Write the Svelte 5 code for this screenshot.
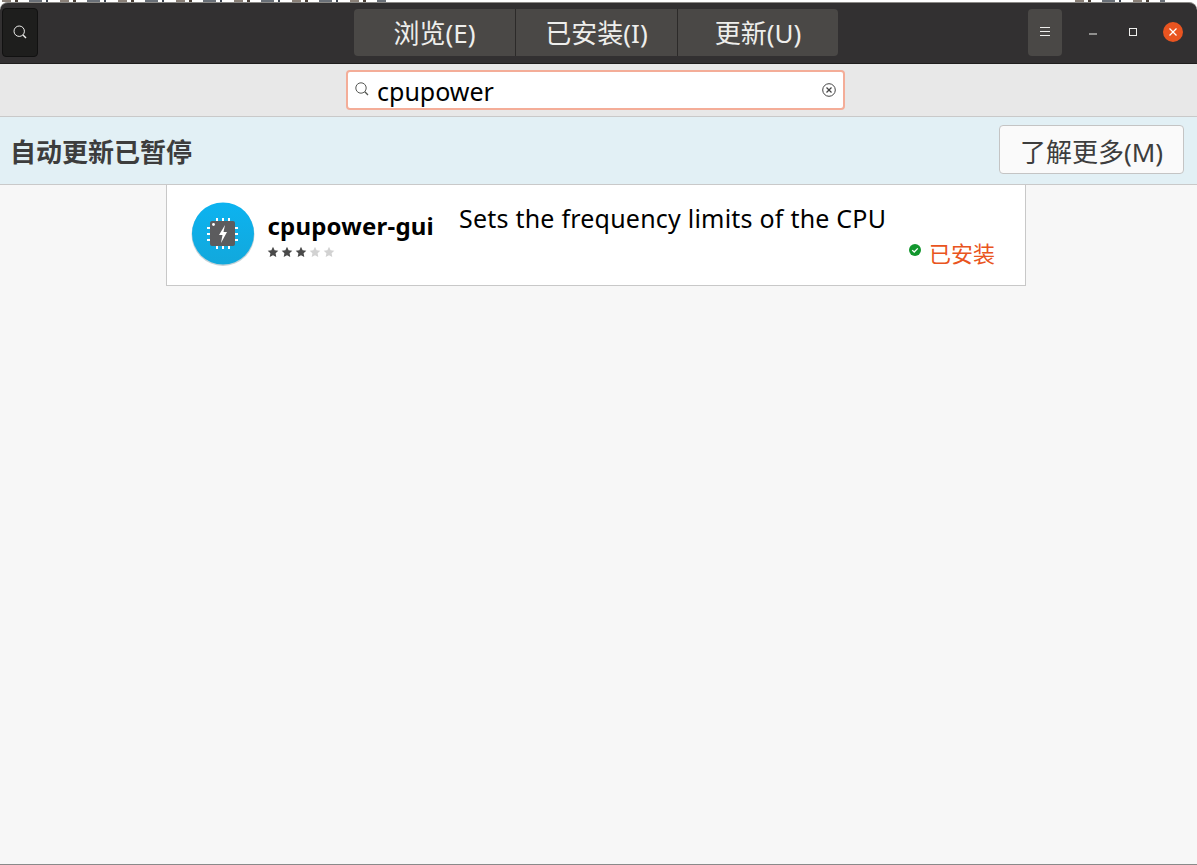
<script>
  const tabs = [
    { label: '浏览(E)', width: 161 },
    { label: '已安装(I)', width: 162 },
    { label: '更新(U)', width: 161 }
  ];
  const stars = [true, true, true, false, false];
  // little pins around the chip, offsets inside the 64px icon
  const pins = [25, 31, 37];
</script>

<div class="window">
  <div class="behind">
    <span class="scraps left"></span>
    <span class="scraps right"></span>
  </div>

  <header class="titlebar">
    <button class="tool search-toggle" aria-label="搜索">
      <svg width="16" height="16" viewBox="0 0 16 16" fill="none" stroke="#eeeeec" stroke-width="1">
        <circle cx="7.2" cy="7.2" r="5.2" />
        <line x1="11" y1="11" x2="14" y2="14" stroke-width="1.4" />
      </svg>
    </button>

    <nav class="tabs">
      {#each tabs as tab}
        <button class="tab" style="width: {tab.width}px">{tab.label}</button>
      {/each}
    </nav>

    <div class="controls">
      <button class="tool menu" aria-label="菜单">
        <svg width="12" height="12" viewBox="0 0 12 12" stroke="#eeeeec" stroke-width="1">
          <line x1="1" y1="1.5" x2="11" y2="1.5" />
          <line x1="1" y1="5.5" x2="11" y2="5.5" />
          <line x1="1" y1="9.5" x2="11" y2="9.5" />
        </svg>
      </button>
      <svg class="min" width="8" height="2" viewBox="0 0 8 2"><rect width="8" height="1" y="0.5" fill="#eeeeec" /></svg>
      <svg class="max" width="8" height="8" viewBox="0 0 8 8" fill="none" stroke="#eeeeec" stroke-width="1"><rect x="0.5" y="0.5" width="7" height="7" /></svg>
      <span class="close">
        <svg width="10" height="10" viewBox="0 0 10 10" stroke="#fff" stroke-width="1.3">
          <line x1="1.5" y1="1.5" x2="8.5" y2="8.5" />
          <line x1="8.5" y1="1.5" x2="1.5" y2="8.5" />
        </svg>
      </span>
    </div>
  </header>

  <div class="searchbar">
    <div class="entry">
      <svg class="entry-icon" width="16" height="16" viewBox="0 0 16 16" fill="none" stroke="#555753" stroke-width="1">
        <circle cx="7" cy="7" r="5.2" />
        <line x1="10.8" y1="10.8" x2="14" y2="14" stroke-width="1.3" />
      </svg>
      <span class="query">cpupower</span>
      <svg class="clear" width="16" height="16" viewBox="0 0 16 16" fill="none" stroke="#444" stroke-width="1">
        <circle cx="8" cy="8" r="6.3" />
        <line x1="5.5" y1="5.5" x2="10.5" y2="10.5" stroke-width="1.3" />
        <line x1="10.5" y1="5.5" x2="5.5" y2="10.5" stroke-width="1.3" />
      </svg>
    </div>
  </div>

  <div class="infobar">
    <strong>自动更新已暂停</strong>
    <button class="more">了解更多(M)</button>
  </div>

  <main class="content">
    <div class="card">
      <svg class="app-icon" width="64" height="64" viewBox="0 0 64 64">
        <defs>
          <linearGradient id="disc" x1="0" y1="0" x2="0" y2="1">
            <stop offset="0" stop-color="#0cb3f0" />
            <stop offset="1" stop-color="#12a8dc" />
          </linearGradient>
        </defs>
        <circle cx="32" cy="32.5" r="31.5" fill="#6f8f9c" opacity="0.4" />
        <circle cx="32" cy="31.5" r="31" fill="url(#disc)" />
        <g fill="#fff">
          {#each pins as p}
            <rect x={p} y="16" width="2" height="3" />
            <rect x={p} y="44" width="2" height="3" />
            <rect x="16" y={p} width="3" height="2" />
            <rect x="44" y={p} width="3" height="2" />
          {/each}
        </g>
        <rect x="19" y="19" width="25" height="25" rx="2" fill="#5c5c5e" />
        <circle cx="22.5" cy="22.5" r="1.4" fill="#fff" />
        <path d="M34 23 L28 33 H31.5 L30 41 L36 30 H32.5 Z" fill="#fff" />
      </svg>
      <div class="name-col">
        <div class="name">cpupower-gui</div>
        <div class="stars">
          {#each stars as on}
            <svg width="12" height="12" viewBox="0 0 12 12"><path d="M6 .8l1.6 3.4 3.7.5-2.7 2.6.7 3.7L6 9.2 2.7 11l.7-3.7L.7 4.7l3.7-.5z" fill={on ? '#4a4a4a' : '#d2d2d2'} /></svg>
          {/each}
        </div>
      </div>
      <div class="summary">Sets the frequency limits of the CPU</div>
      <div class="status">
        <svg class="tick" width="12" height="12" viewBox="0 0 12 12">
          <circle cx="6" cy="6" r="6" fill="#12972e" />
          <path d="M3.2 6.1 L5.2 8 L8.8 4.4" fill="none" stroke="#fff" stroke-width="1.3" />
        </svg>
        <span>已安装</span>
      </div>
    </div>
  </main>
</div>

<style>
  :global(body) {
    margin: 0;
    background: #fff;
  }

  .window {
    width: 1197px;
    height: 865px;
    box-sizing: border-box;
    position: relative;
    padding-top: 2px;
    display: flex;
    flex-direction: column;
    overflow: hidden;
    font-family: "Noto Sans", "Noto Sans CJK SC", sans-serif;
  }

  /* bottoms of the letters of whatever sits behind the window */
  .behind {
    position: absolute;
    left: 0;
    top: 0;
    right: 0;
    height: 3px;
  }

  .scraps {
    position: absolute;
    top: 0;
    height: 2px;
    background: repeating-linear-gradient(90deg,
      #8a8078 0 9px, #fff 9px 13px, #4a4038 13px 16px, #fff 16px 27px,
      #6a7078 27px 40px, #fff 40px 44px, #3c4450 44px 46px, #fff 46px 58px);
  }

  .scraps.left {
    left: 2px;
    width: 384px;
  }

  .scraps.right {
    left: 1075px;
    width: 90px;
    height: 3px;
  }

  button {
    font: inherit;
    padding: 0;
    cursor: pointer;
  }

  .titlebar {
    height: 62px;
    flex-shrink: 0;
    position: relative;
    display: flex;
    align-items: center;
    box-sizing: border-box;
    padding: 0 2px 2px;
    background: #323031;
    border-top: 1px solid #8b8986;
    border-bottom: 1px solid #1f1e1d;
    border-radius: 8px 8px 0 0;
  }

  .tool {
    width: 36px;
    height: 49px;
    display: flex;
    align-items: center;
    justify-content: center;
    border: 1px solid #111;
    border-radius: 4px;
    background: #1e1e1d;
  }

  .tabs {
    display: flex;
    margin-left: 316px;
  }

  .tab {
    height: 47px;
    padding-top: 2px;
    border: none;
    border-left: 1px solid #2c2a29;
    background: #4a4846;
    color: #eeeeec;
    font-size: 26px;
    line-height: 45px;
  }

  .tab:first-child {
    border-left: none;
    border-radius: 4px 0 0 4px;
  }

  .tab:last-child {
    border-radius: 0 4px 4px 0;
  }

  .controls {
    display: flex;
    align-items: center;
    margin-left: auto;
    padding-right: 12px;
  }

  .menu {
    width: 34px;
    height: 47px;
    border: none;
    background: #4a4846;
    margin-right: 27px;
  }

  .min {
    margin-top: 4px;
  }

  .max {
    margin-left: 32px;
  }

  .close {
    width: 20px;
    height: 20px;
    margin-left: 26px;
    border-radius: 50%;
    background: #e95420;
    display: flex;
    align-items: center;
    justify-content: center;
  }

  .searchbar {
    height: 53px;
    flex-shrink: 0;
    box-sizing: border-box;
    display: flex;
    justify-content: center;
    align-items: flex-start;
    padding: 6px 6px 0 0;
    background: #e8e8e8;
    border-bottom: 1px solid #c9c9c9;
  }

  .entry {
    width: 499px;
    height: 40px;
    box-sizing: border-box;
    display: flex;
    align-items: center;
    padding: 0 6px 0 6px;
    background: #fff;
    border: 2px solid #f4ad98;
    border-radius: 4px;
  }

  .entry-icon {
    margin-top: -3px;
  }

  .query {
    flex: 1;
    margin-left: 7px;
    padding-top: 2px;
    font-size: 25px;
    color: #000;
  }

  .infobar {
    height: 68px;
    flex-shrink: 0;
    box-sizing: border-box;
    display: flex;
    align-items: center;
    justify-content: space-between;
    padding: 0 13px 0 10px;
    background: #e2f0f5;
    border-bottom: 1px solid #c9c9c9;
  }

  .infobar strong {
    font-size: 26px;
    color: #3d3d3d;
  }

  .more {
    width: 185px;
    height: 49px;
    margin-top: -3px;
    padding-top: 3px;
    border: 1px solid #c4c4c4;
    border-radius: 4px;
    background: #fafafa;
    color: #3d3d3d;
    font-size: 26px;
  }

  .content {
    flex: 1;
    background: #f7f7f7;
    border-bottom: 1px solid #8a8a8a;
  }

  .card {
    width: 860px;
    height: 101px;
    margin-left: 166px;
    box-sizing: border-box;
    position: relative;
    display: flex;
    padding: 17px 0 0 24px;
    background: #fff;
    border: 1px solid #c8c8c8;
    border-top: none;
  }

  .name-col {
    margin-left: 13px;
  }

  .name {
    font-size: 24px;
    font-weight: 700;
    line-height: 32px;
    letter-spacing: 0.2px;
    margin-top: 8px;
    margin-left: -0.5px;
    color: #000;
  }

  .stars {
    display: flex;
    gap: 2px;
    margin-top: 4px;
    margin-left: -1px;
  }

  .summary {
    position: absolute;
    left: 292px;
    top: 16px;
    font-size: 25px;
    letter-spacing: 0.22px;
    line-height: 34px;
    color: #000;
  }

  .status {
    position: absolute;
    right: 30px;
    top: 53px;
    display: flex;
    align-items: flex-start;
    gap: 8px;
    font-size: 22px;
    line-height: 30px;
    color: #e95420;
  }

  .tick {
    margin-top: 6px;
  }
</style>
